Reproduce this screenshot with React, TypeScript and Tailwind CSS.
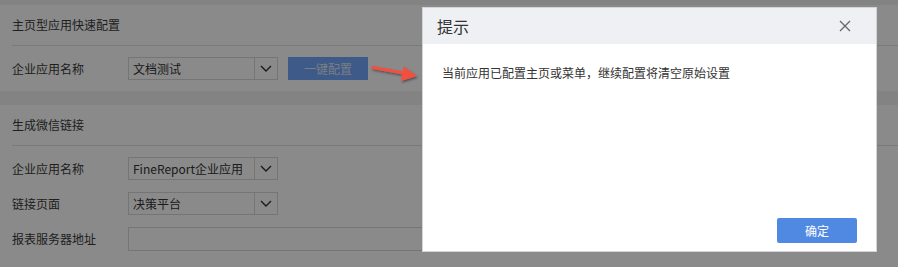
import React from 'react'

const font = { fontFamily: '"Noto Sans CJK SC", "Noto Sans", sans-serif' }

const Chevron = () => (
  <svg width="12" height="7" viewBox="0 0 12 7" fill="none">
    <path d="M1 1l5 5 5-5" stroke="#333" strokeWidth="1.4" />
  </svg>
)

const Select = ({ value }: { value: string }) => (
  <div className="flex h-[23px] w-[150px] border border-[#d8d8d8] bg-white text-[12px] text-[#333]">
    <div className="flex flex-1 items-center pl-[4px]">{value}</div>
    <div className="flex w-[23px] items-center justify-center border-l border-[#d8d8d8]">
      <Chevron />
    </div>
  </div>
)

const Row = ({ label, children }: { label: string; children: React.ReactNode }) => (
  <div className="flex items-center pl-3">
    <div className="w-[116px] text-[12px] text-[#3a3a3a]">{label}</div>
    {children}
  </div>
)

const SectionTitle = ({ title }: { title: string }) => (
  <>
    <div className="flex h-[40px] items-center px-3 text-[12px] text-[#3a3a3a]">{title}</div>
    <div className="ml-3 border-t border-[#e2e2e2]" />
  </>
)

export default function App() {
  return (
    <div className="relative h-[267px] w-[898px] overflow-hidden bg-[#f2f2f2]" style={font}>
      <div className="flex flex-col gap-[14px] pt-[5px]">
        <section className="h-[86px] bg-white">
          <SectionTitle title="主页型应用快速配置" />
          <div className="pt-[11px]">
            <Row label="企业应用名称">
              <Select value="文档测试" />
              <button className="ml-[10px] h-[23px] w-[80px] bg-[#72a6fc] text-[12px] text-[#dfe8f6]">
                一键配置
              </button>
            </Row>
          </div>
        </section>
        <section className="h-[200px] bg-white">
          <SectionTitle title="生成微信链接" />
          <div className="flex flex-col gap-[12px] pt-[11px]">
            <Row label="企业应用名称">
              <Select value="FineReport企业应用" />
            </Row>
            <Row label="链接页面">
              <Select value="决策平台" />
            </Row>
            <Row label="报表服务器地址">
              <div className="h-[24px] w-[400px] border border-[#d8d8d8] bg-white" />
            </Row>
          </div>
        </section>
      </div>

      <div className="absolute inset-0 bg-black/[0.46]" />

      <svg className="absolute left-[368px] top-[58px]" width="56" height="30" viewBox="0 0 56 30">
        <defs>
          <filter id="sh" x="-20%" y="-40%" width="140%" height="180%">
            <feDropShadow dx="1" dy="1.5" stdDeviation="1" floodColor="#000" floodOpacity="0.45" />
          </filter>
        </defs>
        <g filter="url(#sh)" fill="#f2503f" stroke="#f2503f">
          <path d="M5 9.5L38 15.5" strokeWidth="3.2" strokeLinecap="round" />
          <path d="M49 18L35.5 8.5 33 23z" stroke="none" />
        </g>
      </svg>

      <div className="absolute left-[422px] top-[7px] flex h-[245px] w-[455px] flex-col border border-[#d4d4d4] bg-white">
        <div className="flex h-[36px] items-center justify-between bg-[#eef0f3] pl-[14px] pr-[25px]">
          <span className="text-[16px] text-[#333]">提示</span>
          <svg width="12" height="12" viewBox="0 0 12 12">
            <path d="M1 1l10 10M11 1L1 11" stroke="#666" strokeWidth="1.3" />
          </svg>
        </div>
        <div className="flex-1 px-[19px] pt-[20px] text-[12px] text-[#333]">
          当前应用已配置主页或菜单，继续配置将清空原始设置
        </div>
        <div className="flex justify-end pb-[8px] pr-[19px]">
          <button className="h-[25px] w-[80px] rounded-[2px] bg-[#5089e2] text-[12px] text-white">确定</button>
        </div>
      </div>
    </div>
  )
}
